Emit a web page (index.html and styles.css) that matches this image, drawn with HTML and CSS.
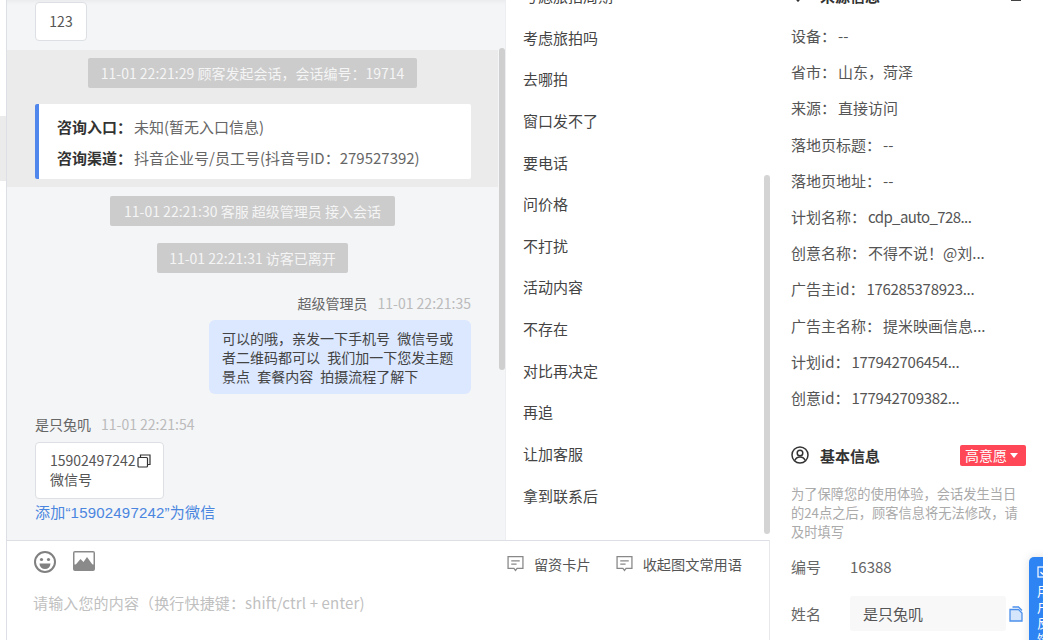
FILE: index.html
```html
<!DOCTYPE html>
<html lang="zh">
<head>
<meta charset="utf-8">
<title>会话</title>
<link rel="stylesheet" href="styles.css">
</head>
<body>
<div class="app">
  <div class="rail"><div class="rail-mark"></div></div>
  <div class="center">
    <div class="upper">
      <section class="chat">
        <div class="bubble-card first">123</div>
        <div class="session">
          <div class="sys">11-01 22:21:29 顾客发起会话，会话编号：19714</div>
          <div class="entry">
            <p><b>咨询入口：</b>未知(暂无入口信息)</p>
            <p><b>咨询渠道：</b>抖音企业号/员工号(抖音号ID：279527392)</p>
          </div>
        </div>
        <div class="sys s2">11-01 22:21:30 客服 超级管理员 接入会话</div>
        <div class="sys s3">11-01 22:21:31 访客已离开</div>
        <div class="meta right"><span>超级管理员</span><time>11-01 22:21:35</time></div>
        <div class="mine">可以的哦，亲发一下手机号 微信号或者二维码都可以 我们加一下您发主题景点 套餐内容 拍摄流程了解下</div>
        <div class="meta left"><span>是只兔叽</span><time>11-01 22:21:54</time></div>
        <div class="bubble-card wx">
          <div class="wx-num">15902497242<svg class="ic-copy" viewBox="0 0 14 14"><path d="M3.500 3V1h9.500v9.500H10.500" fill="none" stroke="#333" stroke-width="1.200"/><rect x="1" y="3.500" width="9.500" height="9.500" rx="1" fill="none" stroke="#333" stroke-width="1.200"/></svg></div>
          <div>微信号</div>
        </div>
        <a class="add-link">添加“15902497242”为微信</a>
        <div class="thumb"></div>
      </section>
      <aside class="phrases">
        <ul>
          <li>考虑旅拍周期</li>
          <li>考虑旅拍吗</li>
          <li>去哪拍</li>
          <li>窗口发不了</li>
          <li>要电话</li>
          <li>问价格</li>
          <li>不打扰</li>
          <li>活动内容</li>
          <li>不存在</li>
          <li>对比再决定</li>
          <li>再追</li>
          <li>让加客服</li>
          <li>拿到联系后</li>
        </ul>
        <div class="thumb2"></div>
      </aside>
    </div>
    <div class="composer">
      <div class="tools">
        <svg class="ic-emoji" viewBox="0 0 24 24"><circle cx="12" cy="12" r="10" fill="none" stroke="#808080" stroke-width="2"/><circle cx="8.500" cy="9.500" r="1.600" fill="#808080"/><circle cx="15.500" cy="9.500" r="1.600" fill="#808080"/><path d="M6.500 13.500h11a5.500 5.500 0 0 1-11 0z" fill="#808080"/></svg>
        <svg class="ic-image" viewBox="0 0 22 20"><rect width="22" height="20" rx="2" fill="#8a8a8a"/><rect x="1.500" y="1.500" width="19" height="12" fill="#fff"/><path d="M1.500 15l6-7 3 3 3.500-5 6.500 9v3h-19z" fill="#8a8a8a"/></svg>
        <div class="actions">
          <span class="act"><svg class="ic-msg" viewBox="0 0 16 16"><path d="M1 1.500h14v11H9.500L8 14.500 6.500 12.500H1z" fill="none" stroke="#888" stroke-width="1.200"/><path d="M4 5.500h8M4 8.500h5" stroke="#888" stroke-width="1.200"/></svg>留资卡片</span>
          <span class="act"><svg class="ic-msg" viewBox="0 0 16 16"><path d="M1 1.500h14v11H9.500L8 14.500 6.500 12.500H1z" fill="none" stroke="#888" stroke-width="1.200"/><path d="M4 5.500h8M4 8.500h5" stroke="#888" stroke-width="1.200"/></svg>收起图文常用语</span>
        </div>
      </div>
      <div class="placeholder">请输入您的内容（换行快捷键：shift/ctrl + enter)</div>
    </div>
  </div>
  <aside class="info">
    <h3 class="clip-head"><svg class="ic-pin" viewBox="0 0 16 16"><path d="M8 15L2.500 8.500 8 2l5.500 6.500z" fill="none" stroke="#333" stroke-width="1.600"/></svg>来源信息<i class="clip-mark"></i></h3>
    <dl class="src">
      <dd><span class="k">设备：</span>--</dd>
      <dd><span class="k">省市：</span>山东，菏泽</dd>
      <dd><span class="k">来源：</span>直接访问</dd>
      <dd><span class="k">落地页标题：</span>--</dd>
      <dd><span class="k">落地页地址：</span>--</dd>
      <dd><span class="k">计划名称：</span><span class="code">cdp_auto_728...</span></dd>
      <dd><span class="k">创意名称：</span>不得不说！@刘...</dd>
      <dd><span class="k">广告主id：</span><span class="num">176285378923...</span></dd>
      <dd><span class="k">广告主名称：</span>提米映画信息...</dd>
      <dd><span class="k">计划id：</span><span class="num">177942706454...</span></dd>
      <dd><span class="k">创意id：</span><span class="num">177942709382...</span></dd>
    </dl>
    <div class="basic-head">
      <svg class="ic-user" viewBox="0 0 18 18"><circle cx="9" cy="9" r="8" fill="none" stroke="#333" stroke-width="1.500"/><circle cx="9" cy="7" r="2.800" fill="none" stroke="#333" stroke-width="1.500"/><path d="M3.800 14.500c1-2.500 2.800-3.500 5.200-3.500s4.200 1 5.200 3.500" fill="none" stroke="#333" stroke-width="1.500"/></svg>
      <strong>基本信息</strong>
      <span class="tag">高意愿<i class="caret"></i></span>
    </div>
    <p class="note">为了保障您的使用体验，会话发生当日的24点之后，顾客信息将无法修改，请及时填写</p>
    <div class="field no"><label>编号</label><span>16388</span></div>
    <div class="field name"><label>姓名</label><span class="input">是只兔叽</span>
      <svg class="ic-doc" viewBox="0 0 14 16"><path d="M1 3.500h8.500l3.500 3.500v8H1z" fill="#d5e5fb" stroke="#4d90ec" stroke-width="1.300"/><path d="M3.500 1h6l3.500 3.500" fill="none" stroke="#4d90ec" stroke-width="1.300"/></svg>
    </div>
  </aside>
  <div class="float">
    <svg viewBox="0 0 12 12"><rect x="1" y="1" width="10" height="10" fill="none" stroke="#fff" stroke-width="1.200"/><path d="M3.500 6l2 2 3-3.500" fill="none" stroke="#fff" stroke-width="1.200"/></svg>
    <span>用户反馈</span>
  </div>
</div>
</body>
</html>
```
FILE: styles.css
```css
* { box-sizing: border-box; }
html, body { margin: 0; height: 100%; overflow: hidden; background: #fff; }
body { font-family: "Noto Sans CJK SC", "Noto Sans", sans-serif; font-size: 14px; color: #333; }
.app { position: relative; display: flex; width: 1043px; height: 640px; overflow: hidden; }

.rail { width: 6px; flex: none; background: #fff; padding-top: 116px; }
.rail-mark { height: 65px; background: #ebebeb; }

.center { width: 763px; flex: none; display: flex; flex-direction: column; border-left: 1px solid #dcdfe3; }
.upper { display: flex; height: 540px; flex: none; }
.chat { position: relative; width: 498px; flex: none; background: #f4f5f7; padding-top: 2px; overflow: hidden; box-shadow: inset 0 6px 6px -6px rgba(0,0,0,.08); }

.bubble-card { background: #fff; border: 1px solid #dcdfe3; border-radius: 4px; color: #555; }
.first { width: 52px; height: 39px; margin-left: 28px; line-height: 37px; text-align: center; font-size: 14px; }

.session { width: 491px; height: 137px; margin-top: 9px; padding-top: 8px; background: #ebebeb; }
.sys { width: max-content; height: 30px; margin: 0 auto; padding: 0 13px; line-height: 30px; background: #cccccc; color: #f5f5f5; border-radius: 2px; font-size: 14px; }
.entry { width: 436px; height: 75px; margin: 16px 0 0 28px; padding: 7px 0 0 18px; background: #fff; border-left: 4px solid #5087ec; border-radius: 2px; color: #666; font-size: 15px; }
.entry p { margin: 0; line-height: 31px; height: 31px; white-space: nowrap; }
.entry b { color: #333; font-weight: 700; margin-right: 2px; }

.s2 { width: 285px; padding: 0; margin: 9px 0 0 103px; text-align: center; }
.s3 { width: 191px; padding: 0; margin: 17px 0 0 150px; text-align: center; }

.meta { display: flex; gap: 10px; height: 20px; line-height: 20px; color: #666; }
.meta time { color: #bbb; }
.meta.right { justify-content: flex-end; margin: 20px 34px 0 0; }
.meta.left { margin: 20px 0 0 28px; }

.mine { width: 262px; height: 74px; margin: 7px 0 0 202px; padding: 9px 13px; background: #dbe8ff; border-radius: 6px; font-size: 14px; line-height: 19px; color: #444; word-spacing: 4px; }

.wx { width: 129px; height: 57px; margin: 8px 0 0 28px; padding: 8px 14px; font-size: 14px; line-height: 19px; }
.wx-num { display: flex; align-items: center; white-space: nowrap; }
.ic-copy { width: 14px; height: 14px; flex: none; margin-left: 2px; }
.add-link { display: block; margin: 4px 0 0 28px; color: #4a86e0; line-height: 20px; font-size: 15px; letter-spacing: .2px; font-family: "Liberation Sans", "Noto Sans CJK SC", sans-serif; }

.thumb { position: absolute; right: 0; top: 48px; width: 6px; height: 322px; border-radius: 3px; background: #cfcfcf; }

.phrases { position: relative; width: 265px; flex: none; background: #fff; border-left: 1px solid #eceef1; overflow: hidden; }
.phrases ul { list-style: none; margin: -25px 0 0; padding: 0 0 0 17px; }
.phrases li { height: 41.640px; line-height: 41.640px; color: #444; white-space: nowrap; font-size: 15px; }
.thumb2 { position: absolute; right: 0; top: 175px; width: 6px; height: 359px; border-radius: 3px; background: #d4d4d4; }

.composer { flex: 1; background: #fff; border-top: 1px solid #dcdfe3; padding: 0 0 0 26px; }
.tools { display: flex; align-items: center; height: 41px; }
.ic-emoji { width: 24px; height: 24px; margin-right: 16px; }
.ic-image { width: 22px; height: 20px; margin-top: -2px; }
.actions { display: flex; gap: 25px; margin-left: auto; margin-right: 27px; color: #555; font-size: 14.200px; margin-top: 4px; }
.act { display: flex; align-items: center; gap: 10px; }
.ic-msg { width: 17px; height: 17px; }
.placeholder { margin-top: 10px; color: #c0c0c0; line-height: 22px; font-size: 15px; letter-spacing: .15px; }

.info { flex: 1; min-width: 0; border-left: 1px solid #e6e8eb; padding-left: 21px; white-space: nowrap; overflow: hidden; color: #555; font-size: 15px; }
.clip-head { display: flex; align-items: center; gap: 15px; height: 16px; margin: -13px 0 0; font-size: 15px; color: #333; position: relative; }
.ic-pin { width: 14px; height: 14px; }
.clip-mark { position: absolute; left: 220px; top: 12px; width: 10px; height: 2px; background: #444; }
.src { margin: 15px 0 0; }
.src dd { margin: 0; height: 36.200px; line-height: 36px; color: #555; }
.k { margin-right: 2px; }
.num { letter-spacing: -.3px; }
.code { letter-spacing: -.6px; }

.basic-head { display: flex; align-items: center; height: 22px; margin-top: 28px; }
.ic-user { width: 18px; height: 18px; margin-right: 11px; }
.basic-head strong { font-weight: 700; color: #333; font-size: 15px; }
.tag { display: flex; align-items: center; margin-left: auto; margin-right: 17px; height: 21px; width: 66px; padding-left: 5px; gap: 3px; background: #ff4757; color: #fff; border-radius: 2px; font-size: 14px; line-height: 21px; }
.caret { width: 0; height: 0; border: 4px solid transparent; border-top: 5px solid #fff; border-bottom: 0; }
.note { margin: 18px 0 0; width: 232px; white-space: normal; color: #aaa; font-size: 13.250px; line-height: 19px; }
.field { display: flex; align-items: center; color: #666; }
.field label { width: 59px; flex: none; }
.no { margin-top: 13px; height: 24px; }
.name { margin-top: 18px; }
.input { width: 156px; height: 35px; flex: none; padding-left: 13px; line-height: 35px; background: #f8f8f8; border-radius: 3px; color: #555; }
.ic-doc { width: 14px; height: 16px; margin-left: 3px; }

.float { position: absolute; left: 1029px; top: 557px; width: 40px; height: 100px; padding: 9px 0 0 8px; background: #2e84f2; border-radius: 5px 0 0 0; box-shadow: 0 0 10px rgba(0,0,0,.12); color: #fff; font-size: 13px; line-height: 16px; }
.float svg { display: block; width: 12px; height: 12px; margin-bottom: 5px; }
.float span { display: block; width: 14px; }
```
